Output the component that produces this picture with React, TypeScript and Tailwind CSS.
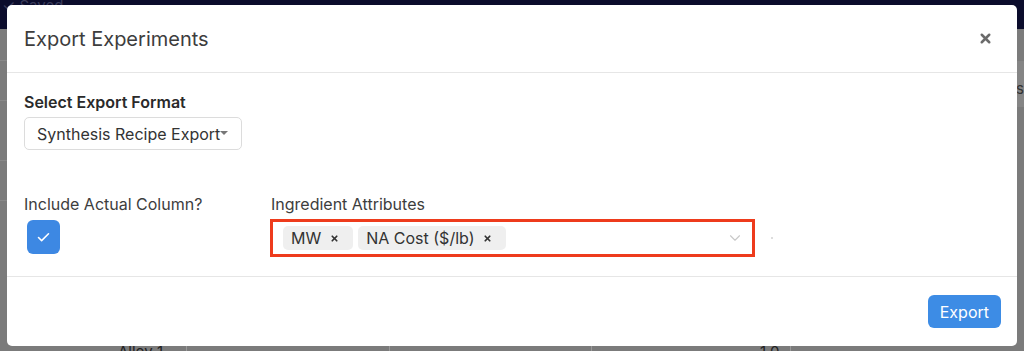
import { Check, ChevronDown, X } from "lucide-react";

const chips = ["MW", "NA Cost ($/lb)"];

function Backdrop() {
  // dimmed app behind the modal
  return (
    <div className="absolute inset-0 flex flex-col">
      <div className="h-[29px] bg-[#0b0c2c] text-[#3a3b5a] text-[15px] leading-[12px] px-[2px]">✓ Saved</div>
      <div className="relative flex-1 bg-[#7b7b7b]">
        <div className="absolute left-0 top-[31px] w-[8px] h-px bg-[#888]" />
        <div className="absolute left-0 top-[71px] w-[8px] h-px bg-[#888]" />
        <div className="absolute left-0 top-[131px] w-[8px] h-px bg-[#888]" />
        <div className="absolute left-0 top-[171px] w-[8px] h-px bg-[#888]" />
        <div className="absolute right-0 top-[32px] w-[8px] h-[46px] bg-[#858585] text-[#333] text-[15px] leading-[56px]">s</div>
        <div className="absolute left-[118px] top-[312px] text-[15px] text-[#222]">Alloy 1</div>
        <div className="absolute left-[186px] top-[316px] w-px h-[10px] bg-[#999]" />
        <div className="absolute left-[389px] top-[316px] w-px h-[10px] bg-[#999]" />
        <div className="absolute left-[591px] top-[316px] w-px h-[10px] bg-[#999]" />
        <div className="absolute left-[760px] top-[312px] text-[15px] text-[#222]">1.0</div>
        <div className="absolute left-[790px] top-[316px] w-px h-[10px] bg-[#999]" />
      </div>
    </div>
  );
}

export default function App() {
  return (
    <div
      className="relative w-[1024px] h-[351px] overflow-hidden"
      style={{ fontFamily: "Inter, 'Noto Sans', sans-serif" }}
    >
      <Backdrop />

      {/* Modal */}
      <div className="absolute left-[7px] top-[5px] w-[1010px] h-[341px] bg-white rounded-[5px] flex flex-col">
        <div className="h-[68px] shrink-0 flex items-center justify-between pl-[17px] pr-[24px] border-b border-[#e6e6e6]">
          <h2 className="text-[20px] text-[#3d3d3d] font-normal">Export Experiments</h2>
          <X className="w-[15px] h-[15px] text-[#6b6b6b]" strokeWidth={4} />
        </div>

        <div className="h-[204px] shrink-0 border-b border-[#e6e6e6] pl-[17px] pt-[20px]">
          <div className="text-[16px] font-semibold text-[#2a2a2a] leading-[18px]">Select Export Format</div>
          <div className="mt-[6px] w-[218px] h-[33px] border border-[#dcdcdc] rounded-[5px] flex items-center pl-[12px] text-[16px] text-[#333]">
            Synthesis Recipe Export
            <span className="w-0 h-0 border-l-[4px] border-r-[4px] border-t-[4px] border-l-transparent border-r-transparent border-t-[#777] -mt-[2px]" />
          </div>

          <div className="mt-[45px] flex">
            <div className="w-[247px]">
              <div className="text-[16px] text-[#3d3d3d] leading-[18px]">Include Actual Column?</div>
              <div className="mt-[7px] ml-[3px] w-[33px] h-[34px] rounded-[6px] bg-[#3d88e3] flex items-center justify-center">
                <Check className="w-[15px] h-[15px] text-white" strokeWidth={2.5} />
              </div>
            </div>
            <div>
              <div className="text-[16px] text-[#3d3d3d] leading-[18px]">Ingredient Attributes</div>
              <div className="mt-[6px] -ml-[1px] w-[485px] h-[38px] border-[3px] border-[#ee3b1c] flex items-center pl-[10px] pr-[8px] gap-[5px]">
                {chips.map((c) => (
                  <div key={c} className="h-[24px] rounded-[5px] bg-[#efefef] flex items-center pl-[8px] pr-[14px] text-[16px] text-[#333]">
                    {c}
                    <X className="ml-[9px] w-[9px] h-[9px] text-[#333]" strokeWidth={4.5} />
                  </div>
                ))}
                <ChevronDown className="ml-auto w-[18px] h-[18px] text-[#c8c8c8]" strokeWidth={1.5} />
              </div>
            </div>
            <div className="ml-[16px] mt-[42px] w-[2px] h-[2px] bg-[#ddd]" />
          </div>
        </div>

        <div className="flex-1 flex justify-end items-start pt-[18px] pr-[16px]">
          <button className="h-[33px] px-[12px] rounded-[6px] bg-[#3d8ce5] text-white text-[16px]">Export</button>
        </div>
      </div>
    </div>
  );
}
